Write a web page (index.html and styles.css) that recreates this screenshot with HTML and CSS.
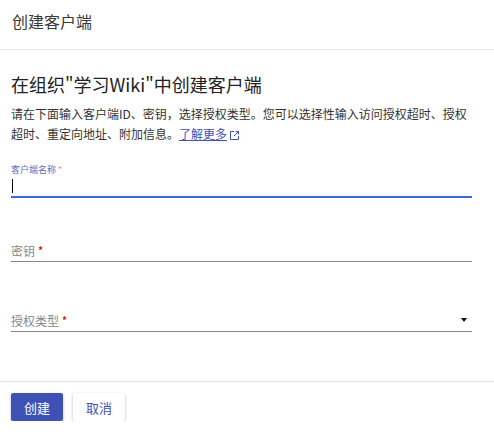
FILE: index.html
```html
<!DOCTYPE html>
<html lang="zh-CN">
<head>
<meta charset="utf-8">
<title>创建客户端</title>
<link rel="stylesheet" href="styles.css">
</head>
<body>
<div class="dialog">
  <div class="header">创建客户端</div>
  <div class="content">
    <h1 class="title">在组织"学习Wiki"中创建客户端</h1>
    <p class="desc">请在下面输入客户端ID、密钥，选择授权类型。您可以选择性输入访问授权超时、授权超时、重定向地址、附加信息。<span class="more"><a class="link" href="#">了解更多</a><svg class="ext" width="9" height="9" viewBox="0 0 9 9"><path d="M4 0.5H0.5V8.5H8.5V5" fill="none" stroke="#3f51b5" stroke-width="1"/><path d="M5.5 0.5H8.5V3.5M8.5 0.5L4 5" fill="none" stroke="#3f51b5" stroke-width="1"/></svg></span></p>
    <div class="field field-focus">
      <div class="float-label">客户端名称 <span class="req">*</span></div>
      <div class="area"><span class="caret"></span></div>
    </div>
    <div class="field field-2">
      <div class="float-label"></div>
      <div class="area"><span class="ph">密钥 <span class="req">*</span></span></div>
    </div>
    <div class="field field-3">
      <div class="float-label"></div>
      <div class="area select"><span class="ph">授权类型 <span class="req">*</span></span><span class="arrow"></span></div>
    </div>
  </div>
  <div class="footer">
    <button class="btn btn-primary">创建</button>
    <button class="btn btn-plain">取消</button>
  </div>
</div>
</body>
</html>
```
FILE: styles.css
```css
html, body {
  margin: 0;
  padding: 0;
  background: #fff;
}
body {
  font-family: "Noto Sans CJK SC", "Noto Sans", "Liberation Sans", sans-serif;
  color: #333;
}
.dialog {
  width: 494px;
}
.header {
  font-size: 16px;
  line-height: 24px;
  padding: 9px 12px 16px;
  color: #3a3a3a;
  border-bottom: 1px solid #e3e3e3;
}
.content {
  padding: 0 22px 0 11px;
}
.title {
  margin: 21px 0 0;
  font-size: 18px;
  line-height: 26px;
  font-weight: 400;
  color: #222;
}
.desc {
  margin: 7px 0 0;
  font-size: 12px;
  line-height: 20px;
  color: #333;
}
.more {
  white-space: nowrap;
}
.link {
  color: #3f51b5;
  text-decoration: underline;
}
.ext {
  margin-left: 3px;
  vertical-align: -1px;
}
.field {
  border-bottom: 1px solid #888;
}
.field-focus {
  margin-top: 20px;
  border-bottom: 2px solid #3c6ad4;
}
.field-2 {
  margin-top: 31px;
}
.field-3 {
  margin-top: 37px;
}
.float-label {
  font-size: 9px;
  line-height: 12px;
  height: 12px;
  color: #5c6bc0;
}
.field-focus .req {
  color: #ef8a8a;
}
.req {
  color: #d50000;
}
.area {
  height: 20px;
  font-size: 12px;
  line-height: 20px;
  display: flex;
  align-items: center;
}
.caret {
  display: block;
  width: 1px;
  height: 14px;
  margin-left: 1px;
  background: #000;
}
.ph {
  color: #888;
}
.select {
  justify-content: space-between;
}
.arrow {
  width: 0;
  height: 0;
  border-left: 3px solid transparent;
  border-right: 3px solid transparent;
  border-top: 4px solid #111;
  margin-right: 5px;
  margin-top: -2px;
}
.footer {
  margin-top: 49px;
  border-top: 1px solid #e3e3e3;
  padding: 11px 11px 0;
  display: flex;
  gap: 10px;
}
.btn {
  width: 52px;
  height: 28px;
  border: none;
  border-radius: 2px;
  font-family: "Noto Sans CJK SC", "Noto Sans", sans-serif;
  font-size: 13px;
  padding: 0;
  box-shadow: 0 1px 3px rgba(0, 0, 0, 0.28);
}
.btn-primary {
  background: #3f51b5;
  color: #fff;
}
.btn-plain {
  background: #fff;
  color: #3f51b5;
}
```
